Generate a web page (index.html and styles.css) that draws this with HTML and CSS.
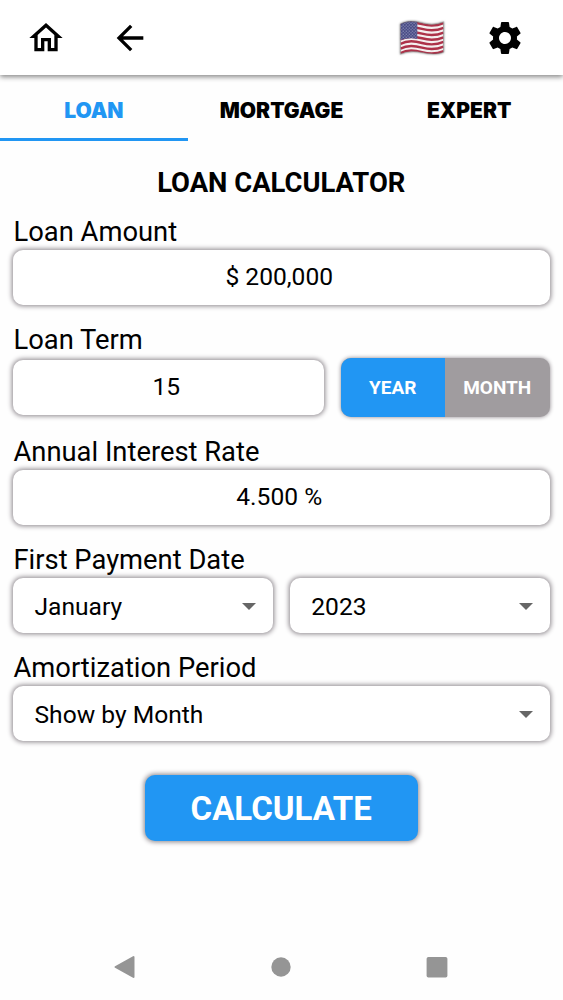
FILE: index.html
```html
<!DOCTYPE html>
<html lang="en">
<head>
  <meta charset="UTF-8" />
  <title>Loan Calculator</title>
  <meta name="viewport" content="width=device-width, initial-scale=1" />
  <link rel="stylesheet" href="styles.css">
</head>
<body>
  <!-- Top bar -->
  <header class="topbar">
    <button class="icon-btn" aria-label="Home">
      <svg viewBox="0 0 24 24"><path d="M12 5.69l5 4.5V18h-2v-6H9v6H7v-7.81l5-4.5M12 3L2 12h3v8h6v-6h2v6h6v-8h3L12 3z"/></svg>
    </button>
    <button class="icon-btn back" aria-label="Back">
      <svg viewBox="0 0 24 24"><path d="M20 11H7.83l5.59-5.59L12 4l-8 8 8 8 1.41-1.41L7.83 13H20v-2z"/></svg>
    </button>
    <button class="flag" aria-label="Language">
      <svg viewBox="0 0 44 33">
        <defs>
          <clipPath id="wave"><path d="M1 3C8-1 15 0 22 2S36 4 43 1V30C36 33 29 32 22 30.500S8 29 1 32Z"/></clipPath>
          <clipPath id="canton"><path d="M0 0H17.500V17.500C11 16 6 17 0 19Z"/></clipPath>
          <pattern id="stars" width="3" height="3" patternUnits="userSpaceOnUse">
            <circle cx=".8" cy=".8" r=".5" fill="#d5d7ea"/><circle cx="2.300" cy="2.300" r=".5" fill="#d5d7ea"/>
          </pattern>
        </defs>
        <g clip-path="url(#wave)">
          <rect width="44" height="33" fill="#f4efef"/>
          <g fill="none" stroke="#ad3249" stroke-width="2.400">
            <path d="M1 4C8 0 15 1 22 3S36 5 43 2"/>
            <path d="M1 8.600C8 4.600 15 5.600 22 7.600S36 9.600 43 6.600"/>
            <path d="M1 13.200C8 9.200 15 10.200 22 12.200S36 14.200 43 11.200"/>
            <path d="M1 17.800C8 13.800 15 14.800 22 16.800S36 18.800 43 15.800"/>
            <path d="M1 22.300C8 18.300 15 19.300 22 21.300S36 23.300 43 20.300"/>
            <path d="M1 26.800C8 22.800 15 23.800 22 25.800S36 27.800 43 24.800"/>
            <path d="M1 31.200C8 27.200 15 28.200 22 30.200S36 32.200 43 29.200"/>
          </g>
          <g clip-path="url(#canton)">
            <rect width="18" height="20" fill="#484b85"/>
            <rect width="18" height="20" fill="url(#stars)"/>
          </g>
        </g>
        <path class="flag-edge" d="M1 3C8-1 15 0 22 2S36 4 43 1V30C36 33 29 32 22 30.500S8 29 1 32Z"/>
      </svg>
    </button>
    <button class="icon-btn" aria-label="Settings">
      <svg viewBox="0 0 24 24"><path d="M19.140 12.940c.04-.3.060-.61.060-.94 0-.32-.02-.64-.07-.94l2.030-1.580c.18-.14.230-.41.120-.61l-1.920-3.320c-.12-.22-.37-.29-.59-.22l-2.390.96c-.5-.38-1.030-.7-1.620-.94l-.36-2.540c-.04-.24-.24-.41-.48-.41h-3.840c-.24 0-.43.170-.47.410l-.36 2.540c-.59.240-1.130.570-1.620.940l-2.390-.96c-.22-.08-.47 0-.59.220L2.740 8.870c-.12.210-.08.470.120.610l2.030 1.580c-.05.300-.09.630-.09.940s.02.640.070.940l-2.030 1.580c-.18.140-.23.410-.12.610l1.920 3.320c.12.220.37.290.59.220l2.390-.96c.5.380 1.030.7 1.620.94l.36 2.540c.05.240.24.410.48.410h3.840c.24 0 .44-.17.470-.41l.36-2.540c.59-.24 1.130-.56 1.620-.94l2.390.96c.22.080.47 0 .59-.22l1.920-3.320c.12-.22.070-.47-.12-.61l-2.010-1.580zM12 15.600c-1.980 0-3.600-1.620-3.600-3.600s1.620-3.600 3.600-3.600 3.600 1.620 3.600 3.600-1.620 3.600-3.600 3.600z"/></svg>
    </button>
  </header>

  <nav class="tabs">
    <a class="tab active" href="#">LOAN</a>
    <a class="tab" href="#">MORTGAGE</a>
    <a class="tab" href="#">EXPERT</a>
  </nav>

  <main class="form">
    <h1>LOAN CALCULATOR</h1>

    <section class="group">
      <label for="amount">Loan Amount</label>
      <input class="field" id="amount" value="$ 200,000" />
    </section>

    <section class="group term">
      <label for="term">Loan Term</label>
      <div class="row">
        <input class="field" id="term" value="15" />
        <div class="toggle">
          <button class="on">YEAR</button>
          <button>MONTH</button>
        </div>
      </div>
    </section>

    <section class="group">
      <label for="rate">Annual Interest Rate</label>
      <input class="field" id="rate" value="4.500 %" />
    </section>

    <section class="group">
      <label>First Payment Date</label>
      <div class="row">
        <div class="field select">January</div>
        <div class="field select">2023</div>
      </div>
    </section>

    <section class="group">
      <label>Amortization Period</label>
      <div class="field select">Show by Month</div>
    </section>

    <button class="calculate">CALCULATE</button>
  </main>

  <!-- System navigation -->
  <footer class="sysnav">
    <svg viewBox="0 0 22 24"><path d="M19.500 2v20L1.500 12z" stroke-width="2" stroke-linejoin="round"/></svg>
    <svg viewBox="0 0 22 24"><circle cx="11" cy="12" r="9.700"/></svg>
    <svg viewBox="0 0 22 24"><rect x=".6" y="1.900" width="20.800" height="20.600" rx="1.800"/></svg>
  </footer>
</body>
</html>
```
FILE: styles.css
```css
:root {
  --blue: #2196f3;
  --grey: #a09c9f;
  --shadow: 0 0 5px 1px #8a848a;
  font-family: Roboto, sans-serif;
}
* { box-sizing: border-box; margin: 0; padding: 0; }
body {
  height: 1000px;
  background: #fefefe;
  color: #000;
  display: flex;
  flex-direction: column;
  overflow: hidden;
}
button, input { border: none; background: none; color: inherit; font-family: inherit; }
svg { display: block; }

.topbar {
  height: 75px;
  flex: none;
  padding: 1px 38px 0 26px;
  display: flex;
  align-items: center;
  background: #fff;
  box-shadow: 0 2px 5px #0007;
}
.icon-btn svg { width: 40px; height: 40px; }
.back { margin-left: 44px; }
.flag { margin: 0 40px 0 auto; }
.flag svg { width: 46px; height: 34px; filter: drop-shadow(0 0 1px #0008); }
.flag-edge { fill: none; stroke: #6666; stroke-width: 1; }

.tabs { display: flex; height: 66px; flex: none; }
.tab {
  flex: 1;
  padding-top: 8px;
  display: flex;
  align-items: center;
  justify-content: center;
  border-bottom: 3px solid transparent;
  color: #000;
  font: 900 21px Inter, sans-serif;
  text-decoration: none;
}
.tab.active { color: var(--blue); border-color: var(--blue); }

.form { padding: 0 13.5px 0 13px; flex: 1; }
h1 {
  margin-top: 24px;
  line-height: 36px;
  font-size: 27.4px;
  font-weight: 700;
  text-align: center;
}
.group { margin-top: 20px; }
h1 + .group { margin-top: 16px; }
.group.term { margin-bottom: 22px; }
label { display: block; height: 33px; line-height: 30px; padding-left: 0.5px; font-size: 27.35px; }
.term label { height: 35px; }
.row { display: flex; align-items: center; gap: 17px; }
.field {
  display: block;
  flex: 1;
  min-width: 0;
  width: 100%;
  height: 55px;
  padding: 0 4px 2px 0;
  border-radius: 10px;
  background: #fff;
  box-shadow: var(--shadow);
  font-size: 24.6px;
  text-align: center;
}
.toggle {
  display: flex;
  width: 209px;
  height: 59px;
  margin: -2px 0;
  border-radius: 10px;
  overflow: hidden;
  background: var(--grey);
  box-shadow: 0 0 4px #8a848a;
}
.toggle button { flex: 1; color: #fff; font-size: 19px; font-weight: 700; }
.toggle .on { background: var(--blue); }
.select {
  display: flex;
  align-items: center;
  justify-content: space-between;
  padding: 2px 17px 0 21.5px;
}
.select::after {
  content: "";
  border: 7px solid transparent;
  border-top-color: #666;
  border-bottom: 0;
}
.calculate {
  display: block;
  width: 273px;
  height: 66px;
  margin: 34px auto 0;
  border-radius: 10px;
  background: var(--blue);
  box-shadow: 0 0 5px 1px #8a848a;
  color: #fff;
  font-size: 33px;
  font-weight: 700;
}

.sysnav {
  display: flex;
  justify-content: space-between;
  padding: 0 115px 21px 113.5px;
}
.sysnav svg { width: 22px; height: 24px; fill: #959595; stroke: #959595; stroke-width: 0; }
```
